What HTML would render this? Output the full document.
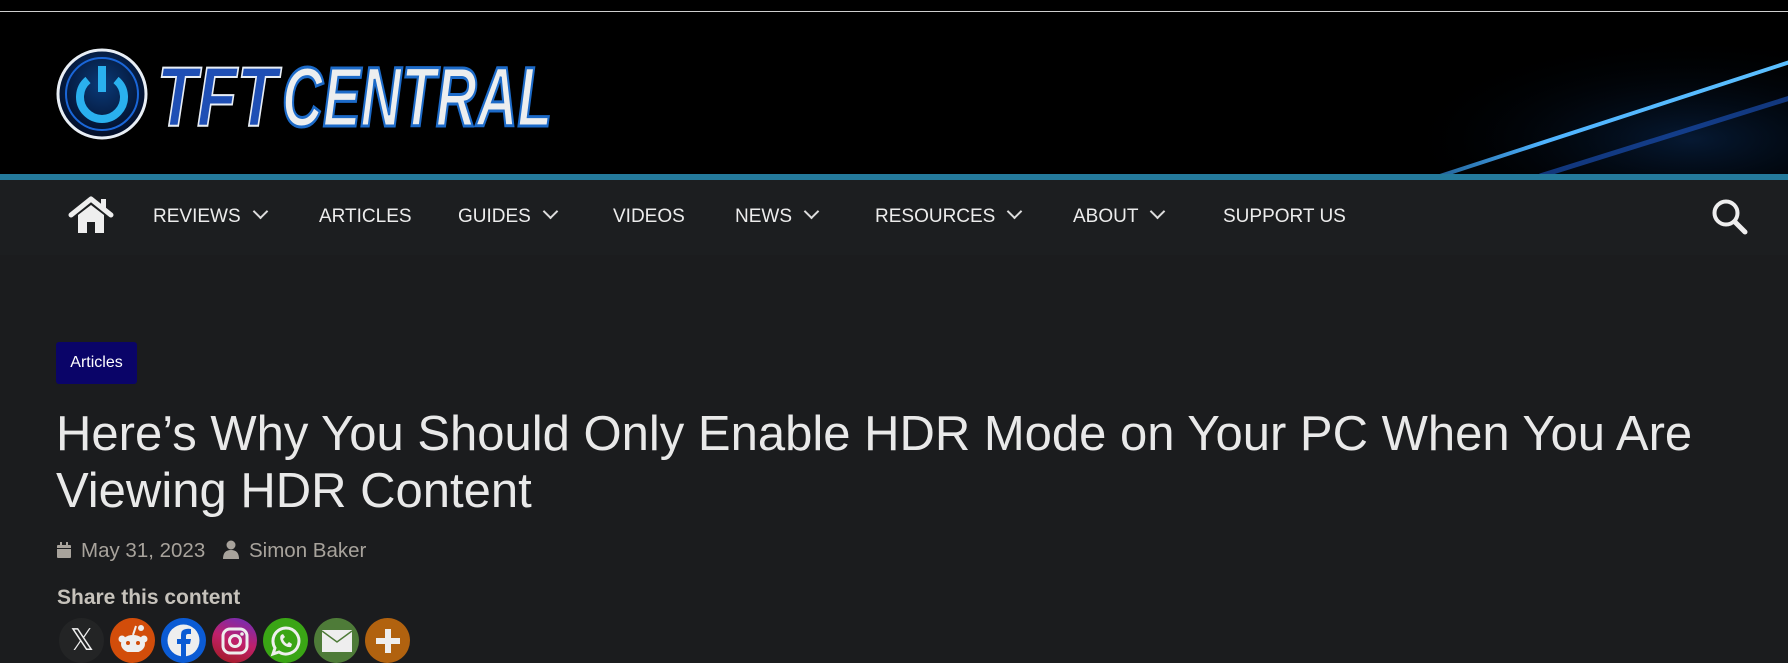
<!DOCTYPE html>
<html><head><meta charset="utf-8"><style>
*{margin:0;padding:0;box-sizing:border-box}
body{width:1788px;height:652px;overflow:hidden;background:#1b1c1e;font-family:"Liberation Sans",sans-serif;position:relative}
.hdr{position:absolute;left:0;top:0;width:1788px;height:174px;background:#000;overflow:hidden}
.wl{position:absolute;left:0;top:11px;width:1788px;height:1px;background:#cfcfcf}
.bar{position:absolute;left:0;top:174px;width:1788px;height:6px;background:#247a9c}
.nav{position:absolute;top:180px;left:0;width:1788px;height:75px;background:#1c1e20}
.ni{position:absolute;top:204px;color:#ececec;font-size:19px;line-height:26px}
.chev{display:inline-block;width:11px;height:11px;border-right:2px solid #ddd;border-bottom:2px solid #ddd;transform:rotate(45deg);margin-left:14px;position:relative;top:-5px}
.badge{position:absolute;left:56px;top:342px;width:81px;height:42px;background:#0a0468;border-radius:3px;color:#fff;font-size:16px;line-height:42px;text-align:center}
h1{position:absolute;left:56px;top:406px;width:1720px;color:#e9e9e9;font-weight:normal;font-size:49px;line-height:57px;letter-spacing:0px}
.meta{position:absolute;top:539px;color:#a8a39c;font-size:20.5px;line-height:24px}
.share{position:absolute;left:57px;top:586px;color:#c6c2bb;font-weight:bold;font-size:21px}
.c{position:absolute;top:618px;width:45px;height:45px;border-radius:50%}
</style></head><body>
<div class="hdr">
<svg width="1788" height="174" style="position:absolute;left:0;top:0">
<defs>
<linearGradient id="s1" x1="0" y1="0" x2="1" y2="0"><stop offset="0" stop-color="#3aa6ff" stop-opacity="0.6"/><stop offset="0.3" stop-color="#4fb4ff"/><stop offset="1" stop-color="#5cc0ff"/></linearGradient>
<radialGradient id="gl" cx="0.8" cy="0.8" r="0.6"><stop offset="0" stop-color="#0a2a55" stop-opacity="0.6"/><stop offset="1" stop-color="#000" stop-opacity="0"/></radialGradient>
<radialGradient id="pc" cx="0.5" cy="0.4" r="0.6"><stop offset="0" stop-color="#0b3a78"/><stop offset="1" stop-color="#020c25"/></radialGradient>
</defs>
<rect x="1300" y="0" width="488" height="174" fill="url(#gl)"/>
<line x1="1440" y1="176" x2="1790" y2="62" stroke="url(#s1)" stroke-width="4"/>
<line x1="1540" y1="176" x2="1790" y2="98" stroke="#1d58c8" stroke-width="5" opacity="0.6"/>
<circle cx="102" cy="94" r="44" fill="url(#pc)" stroke="#e8eef5" stroke-width="3"/>
<circle cx="102" cy="94" r="36" fill="none" stroke="#1a66d8" stroke-width="2"/>
<path d="M88 80 A22 22 0 1 0 116 80" fill="none" stroke="#2ab0ee" stroke-width="8"/>
<rect x="98" y="66" width="8" height="26" fill="#2ab0ee"/>
<text x="157" y="126" font-family="Liberation Sans" font-style="italic" font-weight="bold" font-size="84" fill="#1f4fb5" stroke="#e8eef5" stroke-width="2" textLength="120" lengthAdjust="spacingAndGlyphs">TFT</text>
<text x="282" y="126" font-family="Liberation Sans" font-style="italic" font-weight="bold" font-size="84" fill="#eceeef" stroke="#1c6ac8" stroke-width="3" textLength="270" lengthAdjust="spacingAndGlyphs">CENTRAL</text>
</svg>
<div class="wl"></div>
</div>
<div class="bar"></div>
<div class="nav"></div>
<svg style="position:absolute;left:68px;top:196px" width="46" height="38" viewBox="0 0 46 38"><path d="M3 19 L23 3 L43 19" fill="none" stroke="#eee" stroke-width="5" stroke-linejoin="round" stroke-linecap="round"/><rect x="33" y="3" width="5" height="10" fill="#eee"/><path d="M10 19 L23 9 L36 19 V37 H27 V26 H19 V37 H10Z" fill="#eee"/></svg>
<div class="ni" style="left:153px">REVIEWS<span class="chev"></span></div>
<div class="ni" style="left:319px">ARTICLES</div>
<div class="ni" style="left:458px">GUIDES<span class="chev"></span></div>
<div class="ni" style="left:613px">VIDEOS</div>
<div class="ni" style="left:735px">NEWS<span class="chev"></span></div>
<div class="ni" style="left:875px">RESOURCES<span class="chev"></span></div>
<div class="ni" style="left:1073px">ABOUT<span class="chev"></span></div>
<div class="ni" style="left:1223px">SUPPORT US</div>
<svg style="position:absolute;left:1711px;top:198px" width="38" height="38"><circle cx="15" cy="15" r="11.5" fill="none" stroke="#eee" stroke-width="4"/><line x1="24" y1="24" x2="34" y2="34" stroke="#eee" stroke-width="5" stroke-linecap="round"/></svg>
<div class="badge">Articles</div>
<h1>Here’s Why You Should Only Enable HDR Mode on Your PC When You Are Viewing HDR Content</h1>
<svg style="position:absolute;left:57px;top:542px" width="14" height="16"><rect x="0" y="3" width="14" height="13" rx="1" fill="#a8a39c"/><rect x="3" y="0" width="2" height="4" fill="#a8a39c"/><rect x="9" y="0" width="2" height="4" fill="#a8a39c"/><rect x="0" y="6" width="14" height="1" fill="#1b1c1e"/></svg>
<div class="meta" style="left:81px">May 31, 2023</div>
<svg style="position:absolute;left:223px;top:540px" width="16" height="19"><circle cx="8" cy="5" r="4.5" fill="#a8a39c"/><path d="M0 19 Q0 10 8 10 Q16 10 16 19Z" fill="#a8a39c"/></svg>
<div class="meta" style="left:249px">Simon Baker</div>
<div class="share">Share this content</div>
<div class="c" style="left:59px;background:#232425"></div>
<div style="position:absolute;left:70px;top:626px;color:#eee;font-size:30px;line-height:30px">𝕏</div>
<div class="c" style="left:110px;background:#d24d0a"></div>
<svg style="position:absolute;left:117px;top:624px" width="32" height="28"><ellipse cx="16" cy="20" rx="12" ry="9" fill="#eee"/><circle cx="24" cy="4" r="3" fill="#eee"/><line x1="16" y1="11" x2="19" y2="2" stroke="#eee" stroke-width="2"/><circle cx="5" cy="15" r="3.5" fill="#eee"/><circle cx="27" cy="15" r="3.5" fill="#eee"/><circle cx="11" cy="19" r="2" fill="#d24d0a"/><circle cx="21" cy="19" r="2" fill="#d24d0a"/></svg>
<div class="c" style="left:161px;background:#0b5bd4"></div>
<svg style="position:absolute;left:166px;top:623px" width="35" height="35"><circle cx="17.5" cy="17.5" r="16" fill="#eee"/><path d="M20 36 V21 H24 L25 16 H20 V13 Q20 11 22 11 H25 V6 Q22 5.5 20 6 Q15 6.5 15 12 V16 H11 V21 H15 V36Z" fill="#0b5bd4"/></svg>
<div class="c" style="left:212px;background:linear-gradient(200deg,#6a2fc0,#c0206a 50%,#a01c1c)"></div>
<svg style="position:absolute;left:220px;top:626px" width="30" height="30"><rect x="3" y="3" width="24" height="24" rx="7" fill="none" stroke="#eee" stroke-width="3"/><circle cx="15" cy="15" r="5.5" fill="none" stroke="#eee" stroke-width="3"/><circle cx="22" cy="8" r="1.8" fill="#eee"/></svg>
<div class="c" style="left:263px;background:#3aa515"></div>
<svg style="position:absolute;left:270px;top:625px" width="32" height="32"><path d="M16 3 A13 13 0 1 1 9 27 L3 29 L5 23 A13 13 0 0 1 16 3Z" fill="none" stroke="#eee" stroke-width="3"/><path d="M11 10 Q9 13 12 18 Q16 23 21 22 L22 19 L19 17 L17 19 Q14 17 13 14 L15 12 L13 9Z" fill="#eee"/></svg>
<div class="c" style="left:314px;background:#4e7b38"></div>
<svg style="position:absolute;left:322px;top:630px" width="30" height="22"><rect x="0" y="0" width="30" height="22" fill="#eee"/><path d="M0 1 L15 12 L30 1" fill="none" stroke="#4e7b38" stroke-width="1.5"/></svg>
<div class="c" style="left:365px;background:#b1620f"></div>
<svg style="position:absolute;left:374px;top:627px" width="28" height="28"><rect x="11" y="2" width="6" height="24" fill="#eee"/><rect x="2" y="11" width="24" height="6" fill="#eee"/></svg>
</body></html>
